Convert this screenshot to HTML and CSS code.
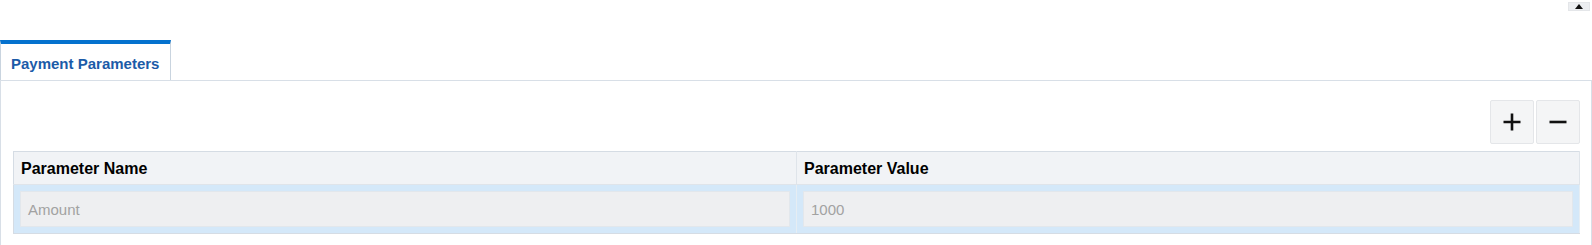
FILE: index.html
```html
<!DOCTYPE html>
<html>
<head>
<meta charset="utf-8">
<link rel="stylesheet" href="styles.css">
</head>
<body>
<div class="topbar">
  <button class="collapse" aria-label="Collapse"><span class="tri"></span></button>
</div>
<div class="tabs">
  <div class="tab">Payment Parameters</div>
</div>
<div class="panel">
  <div class="toolbar">
    <button class="tool">
      <svg width="20" height="20" viewBox="0 0 20 20"><path d="M10 1.5v17M1.5 10h17" stroke="#111" stroke-width="2.6"/></svg>
    </button>
    <button class="tool">
      <svg width="20" height="20" viewBox="0 0 20 20"><path d="M1.5 10h17" stroke="#111" stroke-width="2.6"/></svg>
    </button>
  </div>
  <table class="grid">
    <thead>
      <tr><th>Parameter Name</th><th>Parameter Value</th></tr>
    </thead>
    <tbody>
      <tr>
        <td><div class="field">Amount</div></td>
        <td><div class="field">1000</div></td>
      </tr>
    </tbody>
  </table>
</div>
</body>
</html>
```
FILE: styles.css
```css
* { box-sizing: border-box; }
html, body { margin: 0; padding: 0; background: #fff; }
body { font-family: "Liberation Sans", Arial, sans-serif; width: 1592px; height: 245px; overflow: hidden; }

.topbar { height: 40px; display: flex; justify-content: flex-end; align-items: flex-start; padding: 2px 2px 0 0; }
.collapse { width: 22px; height: 9px; padding: 0; margin: 0; border: 1px solid #e4e6e9; background: #eceef1; display: flex; align-items: center; justify-content: center; }
.tri { width: 0; height: 0; border-left: 4px solid transparent; border-right: 4px solid transparent; border-bottom: 5px solid #111; }

.tabs { height: 40px; display: flex; }
.tab { width: 171px; height: 40px; border-top: 4px solid #0572ce; border-left: 1px solid #c9d4df; border-right: 1px solid #c9d4df; background: #fff; color: #1b5ba8; font-weight: bold; font-size: 15px; padding: 11px 0 0 10px; }

.panel { border: 1px solid #d8dfe7; border-bottom: none; height: 165px; padding: 19px 11px 0 12px; }
.toolbar { display: flex; justify-content: flex-end; gap: 2px; margin-bottom: 7px; }
.tool { width: 44px; height: 44px; border: 1px solid #e4e6e9; border-radius: 2px; background: #f4f5f6; display: flex; align-items: center; justify-content: center; padding: 0; }

.grid { width: 100%; border-collapse: collapse; border: 1px solid #d5dce4; }
.grid th { background: #f1f3f6; text-align: left; font-size: 16px; font-weight: bold; color: #000; height: 33px; padding: 2px 6px 0 7px; border-right: 1px solid #dfe4ea; border-bottom: 1px solid #dfe4ea; }
.grid th:first-child { width: 783px; }
.grid td { background: #d4e8f9; height: 49px; padding: 5px 6px 5px 6px; border-right: 1px solid #e6edf3; border-bottom: 1px solid #d5dce4; }
.field { background: #eeeff1; height: 36px; line-height: 36px; padding-left: 7px; font-size: 15px; color: #a2a2a2; border: 1px solid #e2e7ec; }
```
